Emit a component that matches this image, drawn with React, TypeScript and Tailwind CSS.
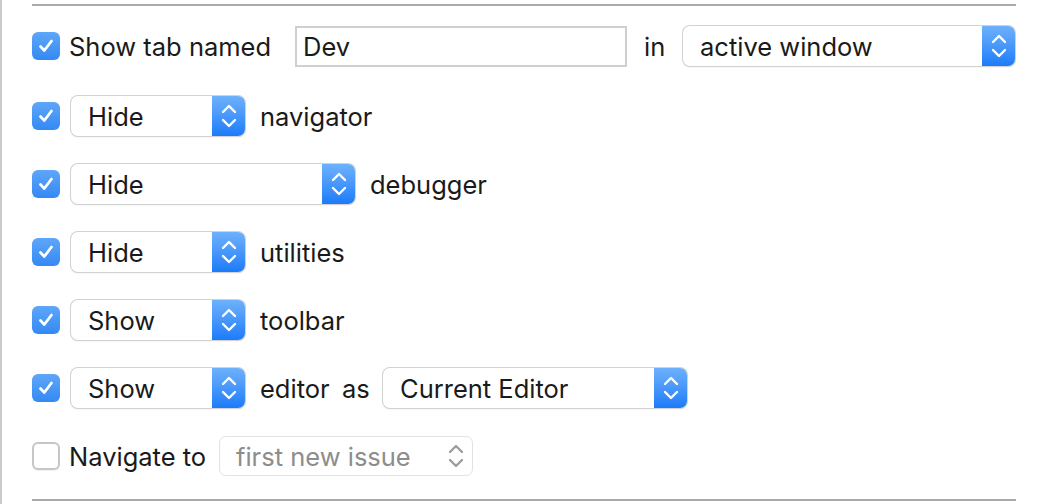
import { ReactNode } from 'react'

const FONT = "font-['Inter','Liberation_Sans',sans-serif]"

function Check({ checked = true }: { checked?: boolean }) {
	if (!checked) {
		return (
			<div className="h-[28px] w-[28px] shrink-0 rounded-[6px] border-2 border-[#c6c6c6] bg-white shadow-[0_1px_1px_rgba(0,0,0,0.06)]" />
		)
	}
	return (
		<div className="flex h-[28px] w-[28px] shrink-0 items-center justify-center rounded-[6px] bg-gradient-to-b from-[#5ea6f9] to-[#3389f4]">
			<svg width="18" height="18" viewBox="0 0 18 18" fill="none">
				<path d="M3.5 9.5 L7.3 13.5 L14.5 4" stroke="white" strokeWidth="2.8" strokeLinecap="round" strokeLinejoin="round" />
			</svg>
		</div>
	)
}

function Arrows({ color }: { color: string }) {
	return (
		<svg width="16" height="26" viewBox="0 0 16 26" fill="none">
			<path d="M2 9 L8 3 L14 9" stroke={color} strokeWidth="2.4" strokeLinecap="round" strokeLinejoin="round" />
			<path d="M2 17 L8 23 L14 17" stroke={color} strokeWidth="2.4" strokeLinecap="round" strokeLinejoin="round" />
		</svg>
	)
}

function Popup({ label, width, disabled = false }: { label: string, width: string, disabled?: boolean }) {
	if (disabled) {
		return (
			<div className={`flex h-[40px] shrink-0 items-center rounded-[7px] border border-[#e2e2e2] bg-white ${width}`}>
				<span className="flex-1 pl-[16px] pt-[2px] text-[#8d8d8d]">{label}</span>
				<div className="flex w-[33px] items-center justify-center">
					<Arrows color="#9d9d9d" />
				</div>
			</div>
		)
	}
	return (
		<div className={`flex h-[40px] shrink-0 items-center overflow-hidden rounded-[7px] bg-white shadow-[0_0_0_1px_#d2d2d2,0_1px_1.5px_rgba(0,0,0,0.18)] ${width}`}>
			<span className="flex-1 pl-[17px] pt-[2px]">{label}</span>
			<div className="flex h-full w-[33px] items-center justify-center bg-gradient-to-b from-[#6db1fb] to-[#1a7bf9]">
				<Arrows color="white" />
			</div>
		</div>
	)
}

function Row({ children, className = '' }: { children: ReactNode, className?: string }) {
	return <div className={`flex h-[40px] items-center ${className}`}>{children}</div>
}

export default function App() {
	return (
		<div className={`h-[504px] w-[1046px] overflow-hidden border-l-2 border-[#cbcbcb] bg-white text-[25.5px] text-[#1a1a1a] ${FONT}`}>
			<div className="flex flex-col pl-[30px] pr-[30px]">
				<div className="mt-1 h-[2px] bg-[#a9a9a9]" />

				<Row className="mt-[20px]">
					<Check />
					<span className="ml-[9px] w-[226px] pt-[2px]">Show tab named</span>
					<div className="flex h-[41px] w-[332px] items-center border-2 border-[#cfcfcf] pl-[6px] pt-[2px]">Dev</div>
					<span className="ml-[17px] w-[39px] pt-[2px]">in</span>
					<Popup label="active window" width="w-[332px]" />
				</Row>

				<div className="mt-[30px] flex flex-col gap-[28px]">
					<Row>
						<Check />
						<div className="ml-[11px]"><Popup label="Hide" width="w-[174px]" /></div>
						<span className="ml-[15px] pt-[2px]">navigator</span>
					</Row>
					<Row>
						<Check />
						<div className="ml-[11px]"><Popup label="Hide" width="w-[284px]" /></div>
						<span className="ml-[15px] pt-[2px]">debugger</span>
					</Row>
					<Row>
						<Check />
						<div className="ml-[11px]"><Popup label="Hide" width="w-[174px]" /></div>
						<span className="ml-[15px] pt-[2px]">utilities</span>
					</Row>
					<Row>
						<Check />
						<div className="ml-[11px]"><Popup label="Show" width="w-[174px]" /></div>
						<span className="ml-[15px] pt-[2px]">toolbar</span>
					</Row>
					<Row>
						<Check />
						<div className="ml-[11px]"><Popup label="Show" width="w-[174px]" /></div>
						<span className="ml-[15px] w-[82px] pt-[2px]">editor</span>
						<span className="w-[41px] pt-[2px]">as</span>
						<Popup label="Current Editor" width="w-[304px]" />
					</Row>
					<Row>
						<Check checked={false} />
						<span className="ml-[9px] w-[150px] pt-[2px]">Navigate to</span>
						<Popup label="first new issue" width="w-[254px]" disabled />
					</Row>
				</div>

				<div className="mt-[23px] h-[2px] bg-[#a9a9a9]" />
			</div>
		</div>
	)
}
